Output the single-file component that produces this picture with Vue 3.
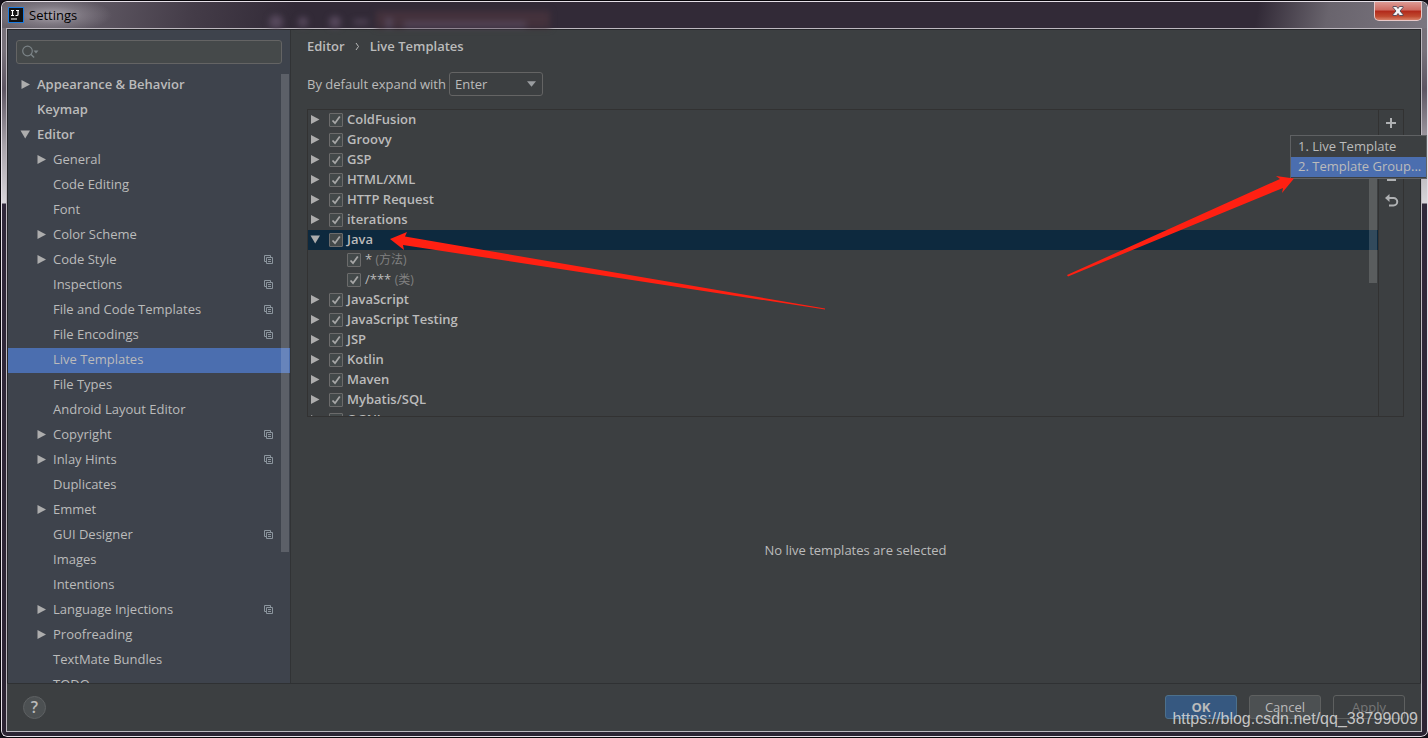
<script setup>
import { ref } from 'vue'

const search = ref('')
const expandKey = ref('Enter')

const tree = [
  { label: 'Appearance & Behavior', level: 0, arrow: 'right' },
  { label: 'Keymap', level: 0 },
  { label: 'Editor', level: 0, arrow: 'down' },
  { label: 'General', level: 1, arrow: 'right' },
  { label: 'Code Editing', level: 1 },
  { label: 'Font', level: 1 },
  { label: 'Color Scheme', level: 1, arrow: 'right' },
  { label: 'Code Style', level: 1, arrow: 'right', project: true },
  { label: 'Inspections', level: 1, project: true },
  { label: 'File and Code Templates', level: 1, project: true },
  { label: 'File Encodings', level: 1, project: true },
  { label: 'Live Templates', level: 1, selected: true },
  { label: 'File Types', level: 1 },
  { label: 'Android Layout Editor', level: 1 },
  { label: 'Copyright', level: 1, arrow: 'right', project: true },
  { label: 'Inlay Hints', level: 1, arrow: 'right', project: true },
  { label: 'Duplicates', level: 1 },
  { label: 'Emmet', level: 1, arrow: 'right' },
  { label: 'GUI Designer', level: 1, project: true },
  { label: 'Images', level: 1 },
  { label: 'Intentions', level: 1 },
  { label: 'Language Injections', level: 1, arrow: 'right', project: true },
  { label: 'Proofreading', level: 1, arrow: 'right' },
  { label: 'TextMate Bundles', level: 1 },
  { label: 'TODO', level: 1 }
]

const templates = ref([
  { label: 'ColdFusion', arrow: 'right', on: true },
  { label: 'Groovy', arrow: 'right', on: true },
  { label: 'GSP', arrow: 'right', on: true },
  { label: 'HTML/XML', arrow: 'right', on: true },
  { label: 'HTTP Request', arrow: 'right', on: true },
  { label: 'iterations', arrow: 'right', on: true },
  { label: 'Java', arrow: 'down', selected: true, on: true },
  { label: '*', note: '(方法)', child: true, on: true },
  { label: '/***', note: '(类)', child: true, on: true },
  { label: 'JavaScript', arrow: 'right', on: true },
  { label: 'JavaScript Testing', arrow: 'right', on: true },
  { label: 'JSP', arrow: 'right', on: true },
  { label: 'Kotlin', arrow: 'right', on: true },
  { label: 'Maven', arrow: 'right', on: true },
  { label: 'Mybatis/SQL', arrow: 'right', on: true },
  { label: 'OGNL', arrow: 'right', on: true }
])
</script>

<template>
  <div class="window">
    <header class="titlebar">
      <svg class="logo" viewBox="0 0 16 16" aria-hidden="true">
        <rect width="16" height="16" fill="#1a7be0" />
        <rect x="1" y="1" width="14" height="14" fill="#111" />
        <path d="M3 3.5h3M4.5 3.5v5M3 8.5h3M8 3.5h3M10 3.5v4q0 1-1 1H7.500" fill="none" stroke="#fff" stroke-width="1.200" />
        <path d="M3 12h6" stroke="#fff" stroke-width="1.200" />
      </svg>
      <span class="title">Settings</span>
      <svg class="ghosts" viewBox="0 0 290 26" aria-hidden="true">
        <circle cx="10" cy="20" r="7" />
        <circle cx="37" cy="20" r="5" />
        <circle cx="69" cy="20" r="6" />
        <path d="M88 18h14v4H88z" />
        <path d="M110 9h174v17H110z" class="tab" />
        <path d="M120 16h6v10h-6zM138 20h122v5H138z" />
      </svg>
      <button class="close" aria-label="Close">
        <svg viewBox="0 0 12 10" aria-hidden="true">
          <path d="M1 .5h3.500L6 2.500 7.500.5H11v1L8 5l3 3.500v1H7.500L6 7.500 4.500 9.500H1v-1L4 5 1 1.500z" fill="#f6f6f6" stroke="#4d4655" stroke-width=".9" />
        </svg>
      </button>
    </header>

    <div class="client">
      <div class="body">
        <aside class="sidebar">
          <label class="search">
            <svg viewBox="0 0 18 14" aria-hidden="true">
              <circle cx="5.500" cy="6" r="4.800" fill="none" stroke="#7b8387" stroke-width="1.200" />
              <path d="M8.800 9.200l3.300 3.300" stroke="#7b8387" stroke-width="1.500" />
              <path d="M11.500 5.500h5l-2.500 3z" fill="#7b8387" />
            </svg>
            <input v-model="search" type="text" aria-label="Search settings" />
          </label>
          <nav class="tree">
            <a
              v-for="item in tree"
              :key="item.label"
              href="#"
              class="node"
              :class="{ top: item.level === 0, selected: item.selected }"
            >
              <span class="twisty">
                <svg v-if="item.arrow === 'right'" viewBox="0 0 10 10"><path d="M1.500 0L10 4.500 1.500 9z" /></svg>
                <svg v-else-if="item.arrow === 'down'" viewBox="0 0 10 10"><path d="M.5 0.500h9.500L5.200 8.500z" /></svg>
              </span>
              <span class="name">{{ item.label }}</span>
              <svg v-if="item.project" class="project" viewBox="0 0 9 9">
                <path d="M2 6.500H.5v-6h6V2M2.500 2.500h6v6h-6zM4 4.500h3M4 6.500h3" />
              </svg>
            </a>
          </nav>
          <i class="thumb side-thumb"></i>
        </aside>

        <main class="content">
          <h1 class="crumbs">
            <span>Editor</span>
            <svg viewBox="0 0 5 9" aria-hidden="true"><path d="M1 1l2.500 3.500L1 8" /></svg>
            <span>Live Templates</span>
          </h1>
          <div class="expand">
            <label for="expand-key">By default expand with</label>
            <span class="combo">
              <select id="expand-key" v-model="expandKey">
                <option>Enter</option>
                <option>Tab</option>
                <option>Space</option>
              </select>
              <svg viewBox="0 0 10 6" aria-hidden="true"><path d="M0 0h10L5 6z" /></svg>
            </span>
          </div>

          <section class="panel">
            <div class="list">
              <div
                v-for="row in templates"
                :key="row.label"
                class="row"
                :class="{ child: row.child, selected: row.selected }"
              >
                <span class="twisty">
                  <svg v-if="row.arrow === 'right'" viewBox="0 0 10 10"><path d="M1 0L9.500 4.500 1 9z" /></svg>
                  <svg v-else-if="row.arrow === 'down'" viewBox="0 0 10 10"><path d="M.5 0.500h9.500L5.200 8.500z" /></svg>
                </span>
                <label>
                  <span class="check">
                    <input v-model="row.on" type="checkbox" />
                    <svg v-if="row.on" viewBox="0 0 14 14" aria-hidden="true"><path d="M3.500 7.500L6 10.200 10.800 3.500" /></svg>
                  </span>
                  <span class="name">{{ row.label }} <span v-if="row.note" class="note">{{ row.note }}</span></span>
                </label>
              </div>
              <i class="thumb list-thumb"></i>
            </div>
            <div class="tools">
              <button aria-label="Add">
                <svg viewBox="0 0 16 16"><path d="M8 3v10M3 8h10" stroke-width="2" /></svg>
              </button>
              <button aria-label="Remove">
                <svg viewBox="0 0 16 16"><path d="M3 8h10" stroke-width="2" /></svg>
              </button>
              <button aria-label="Duplicate">
                <svg viewBox="0 0 16 16"><path d="M3 3h7v7H3zM4 13h9" stroke-width="2" /></svg>
              </button>
              <button aria-label="Restore defaults">
                <svg viewBox="0 0 16 16">
                  <path d="M5 5h5.500a3.700 3.700 0 0 1 0 7.500H6" stroke-width="2" />
                  <path d="M6.500 1v8L2 5z" class="solid" />
                </svg>
              </button>
            </div>
          </section>
          <p class="empty">No live templates are selected</p>
        </main>
      </div>

      <footer class="footer">
        <button class="help" aria-label="Help">?</button>
        <button class="btn primary">OK</button>
        <button class="btn">Cancel</button>
        <button class="btn" disabled>Apply</button>
      </footer>
    </div>

    <div class="menu" role="menu">
      <button role="menuitem">1. Live Template</button>
      <button role="menuitem" class="selected">2. Template Group...</button>
    </div>

    <svg class="pointer to-java" viewBox="0 0 440 80" aria-hidden="true">
      <path d="M5 14L22 7l-2 4.500L440 83.500v1L18 20l1 5z" />
    </svg>
    <svg class="pointer to-group" viewBox="0 0 230 104" aria-hidden="true">
      <path d="M227 7.500L209 5l4 3L0 104l1 1.500L216 17l-1 5z" />
    </svg>
    <span class="watermark">https://blog.csdn.net/qq_38799009</span>
  </div>
</template>

<style>
html,
body {
  background: #15101a;
}
</style>

<style scoped>
* {
  box-sizing: border-box;
}

.window {
  position: relative;
  display: flex;
  flex-direction: column;
  height: 100vh;
  min-height: 480px;
  overflow: hidden;
  padding: 1px 6px 5px 5px;
  border: 1px solid #08060a;
  border-right-width: 0;
  border-radius: 7px;
  background: linear-gradient(180deg, #77717a 0, #77717a 50px, #5d5562 88px, #a8a3aa 145px, #d8d5da 202px, #30283a 203px, #2c2433 100%);
  box-shadow: inset 0 0 0 1px #e6e0e8;
  color: #bbb;
  font-family: "Open Sans", "Noto Sans CJK SC", sans-serif;
  font-size: 13px;
  line-height: 18px;
}

button,
input,
select {
  font: inherit;
  color: inherit;
}

.titlebar {
  display: flex;
  flex: none;
  align-items: center;
  gap: 5px;
  height: 26px;
  margin: 0 -5px 0 -4px;
  padding: 0 5px 0 6px;
  border-radius: 5px 5px 0 0;
  background:
    radial-gradient(ellipse 60px 18px at 50px 13px, #aaa4ad 0, #aaa4ad66 50%, transparent 100%),
    linear-gradient(100deg, #68626b 0, #5c5560 100px, #443c48 190px, #322a37 290px, #322a37 calc(100% - 170px), #69646d calc(100% - 100px), #7b7680 100%);
}

.logo {
  flex: none;
  width: 16px;
  height: 16px;
}

.title {
  width: 232px;
  padding-bottom: 1px;
  color: #000;
}

.ghosts {
  width: 290px;
  height: 26px;
  fill: #57495d;
  filter: blur(3px);
}

.ghosts .tab {
  fill: #44323c;
}

.close {
  display: grid;
  place-items: center;
  align-self: flex-start;
  width: 48px;
  height: 19px;
  margin-left: auto;
  padding: 0;
  border: 1px solid #e8c8c8;
  border-top: 0;
  border-radius: 0 0 5px 5px;
  background: linear-gradient(#dc9a94 0, #cc6a60 45%, #b2281a 50%, #c04a30 80%, #d88068 100%);
}

.close svg {
  width: 12px;
  height: 10px;
}

.client {
  display: flex;
  flex: 1;
  flex-direction: column;
  min-height: 0;
  border: 1px solid #bdb8bf;
  background: #3c3f41;
}

.body {
  display: flex;
  flex: 1;
  min-height: 0;
  border: 1px solid #26272a;
  border-bottom: 0;
}

.sidebar {
  position: relative;
  display: flex;
  flex: none;
  flex-direction: column;
  width: 283px;
  overflow: hidden;
  border-right: 1px solid #313335;
  background: #3e434c;
}

.search {
  display: flex;
  flex: none;
  align-items: center;
  height: 24px;
  margin: 10px 8px 9px;
  padding-left: 5px;
  border: 1px solid #646464;
  border-radius: 3px;
  background: #45494a;
}

.search svg {
  flex: none;
  width: 18px;
  height: 14px;
}

.search input {
  flex: 1;
  min-width: 0;
  border: 0;
  outline: 0;
  background: none;
}

.tree {
  flex: 1;
  min-height: 0;
  overflow: hidden;
}

.node {
  display: flex;
  align-items: center;
  height: 25px;
  padding: 0 17px 2px 28px;
  color: inherit;
  text-decoration: none;
}

.node.top {
  padding-left: 12px;
  font-weight: 600;
}

.node.selected {
  background: #4b6eaf;
}

.node .name {
  flex: 1;
}

.twisty {
  display: flex;
  flex: none;
  width: 17px;
}

.twisty svg {
  width: 10px;
  height: 10px;
  fill: #adadad;
}

.project {
  width: 9px;
  height: 9px;
  fill: none;
  stroke: #8b959d;
}

.thumb {
  position: absolute;
  width: 8px;
  background: #ffffff28;
}

.side-thumb {
  top: 44px;
  right: 1px;
  height: 478px;
}

.content {
  display: flex;
  flex: 1;
  flex-direction: column;
  min-width: 0;
  padding: 6px 16px 0;
}

.crumbs {
  display: flex;
  align-items: center;
  gap: 10px;
  height: 20px;
  margin: 0;
  font-size: 13px;
  font-weight: 600;
}

.crumbs svg {
  width: 5px;
  height: 9px;
  fill: none;
  stroke: #bbb;
}

.expand {
  display: flex;
  align-items: center;
  gap: 3px;
  height: 24px;
  margin: 16px 0 13px;
}

.combo {
  display: grid;
  align-items: center;
  width: 94px;
  height: 24px;
}

.combo > * {
  grid-area: 1 / 1;
}

.combo select {
  width: 100%;
  height: 100%;
  padding: 0 5px;
  border: 1px solid #646464;
  border-radius: 3px;
  background: #3c3f41;
  appearance: none;
}

.combo svg {
  justify-self: end;
  width: 9px;
  height: 6px;
  margin-right: 7px;
  fill: #9a9da0;
  pointer-events: none;
}

.panel {
  display: flex;
  flex: none;
  height: 308px;
  border: 1px solid #323232;
}

.list {
  position: relative;
  flex: 1;
  min-width: 0;
  overflow: hidden;
}

.row {
  display: flex;
  align-items: center;
  height: 20px;
  padding-left: 2px;
  font-weight: 600;
}

.row .twisty {
  width: 19px;
}

.row.child {
  padding-left: 20px;
  font-weight: 400;
}

.row.selected {
  background: #0d293e;
}

.row label {
  display: flex;
  align-items: center;
  gap: 4px;
}

.name {
  padding-bottom: 2px;
}

.check {
  display: grid;
}

.check > * {
  grid-area: 1 / 1;
  width: 14px;
  height: 14px;
}

.check input {
  margin: 0;
  border: 1px solid #6b6b6b;
  border-radius: 1px;
  background: #43494a;
  appearance: none;
}

.check svg {
  fill: none;
  stroke: #a7a7a7;
  stroke-width: 1.8;
  pointer-events: none;
}

.note {
  color: #808080;
  font-size: 12px;
}

.list-thumb {
  top: 50px;
  right: 1px;
  height: 123px;
}

.tools {
  display: flex;
  flex: none;
  flex-direction: column;
  gap: 4px;
  width: 25px;
  padding-top: 2px;
  border-left: 1px solid #323232;
}

.tools button {
  display: grid;
  place-items: center;
  height: 22px;
  padding: 0;
  border: 0;
  background: none;
}

.tools svg {
  width: 16px;
  height: 16px;
  fill: none;
  stroke: #afb1b3;
}

.tools .solid {
  fill: #afb1b3;
  stroke: none;
}

.empty {
  display: grid;
  flex: 1;
  place-items: center;
  margin: 0;
}

.footer {
  display: flex;
  flex: none;
  align-items: center;
  gap: 12px;
  height: 48px;
  padding: 0 16px 1px;
  border-top: 1px solid #2f3133;
}

.help {
  width: 23px;
  height: 23px;
  margin-right: auto;
  padding: 0;
  border: 1px solid #5e6163;
  border-radius: 50%;
  background: #4c5052;
  font-size: 16px;
  font-weight: 600;
  line-height: 20px;
}

.btn {
  width: 72px;
  height: 24px;
  padding: 0;
  border: 1px solid #5e6060;
  border-radius: 3px;
  background: #4c5052;
}

.btn.primary {
  border-color: #4c708c;
  background: #365880;
  font-weight: 700;
}

.btn:disabled {
  background: none;
  color: #777;
}

.menu {
  position: absolute;
  top: 134px;
  right: 1px;
  display: flex;
  flex-direction: column;
  width: 137px;
  padding: 1px 0;
  border: 1px solid #5f6163;
  background: #3c3f41;
}

.menu button {
  height: 20px;
  padding: 0 7px 2px;
  border: 0;
  background: none;
  text-align: left;
  white-space: nowrap;
}

.menu .selected {
  background: #4b6eaf;
}

.pointer {
  position: absolute;
  overflow: visible;
  fill: #ff2012;
  pointer-events: none;
}

.to-java {
  top: 224px;
  left: 384px;
  width: 440px;
  height: 80px;
}

.to-group {
  top: 170px;
  right: 131px;
  width: 230px;
  height: 104px;
}

.watermark {
  position: absolute;
  right: 10px;
  bottom: 8px;
  color: #dcdcdcdd;
  font-family: "Liberation Sans", sans-serif;
  font-size: 16px;
  line-height: 20px;
  pointer-events: none;
}
</style>
